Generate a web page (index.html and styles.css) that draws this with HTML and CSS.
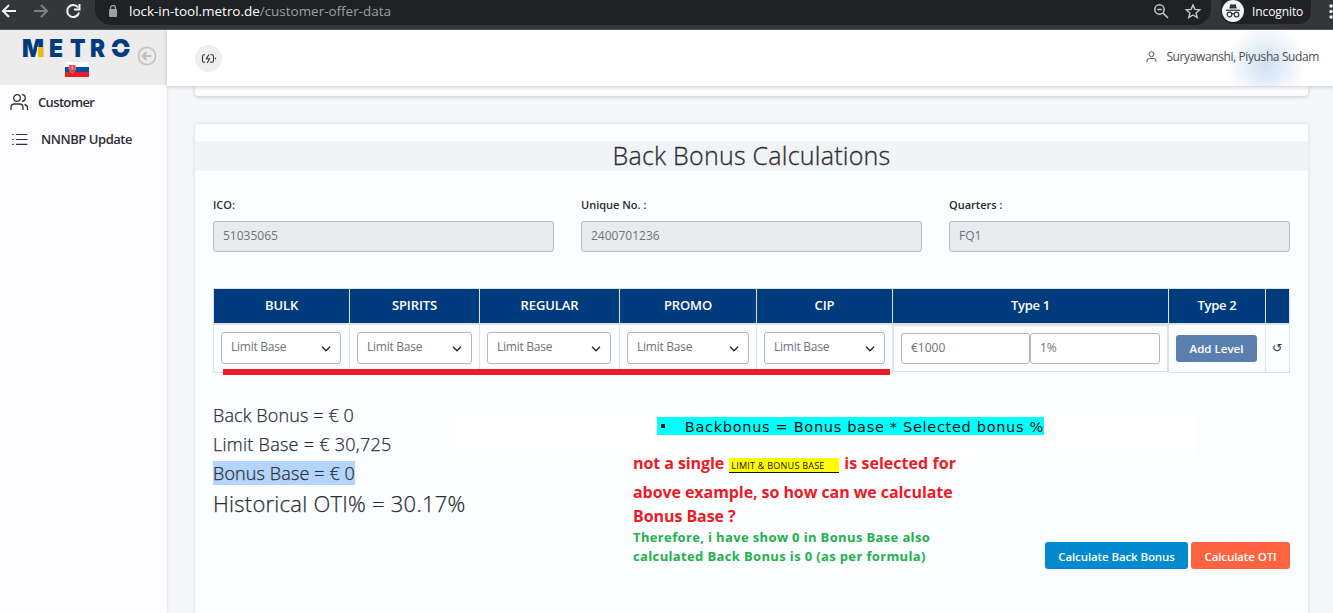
FILE: index.html
```html
<!DOCTYPE html>
<html lang="en">
<head>
<meta charset="utf-8">
<title>Customer offer data</title>
<link rel="stylesheet" href="styles.css">
</head>
<body>
<div class="screen">
  <header class="browser">
    <svg class="nav-icons" width="95" height="24" viewBox="0 0 95 24" fill="none" stroke-width="2">
      <path d="M16 11H3M9 5L3 11l6 6" stroke="#f1f3f4"/>
      <path d="M34 11h13M41 5l6 6-6 6" stroke="#7f8184"/>
      <path d="M78 7.500A6 6 0 1 0 79 12.500M79.500 4v5.500H74" stroke="#f1f3f4"/>
    </svg>
    <div class="address">
      <svg class="lock" width="10" height="12" viewBox="0 0 10 12"><rect x="1" y="4" width="8" height="8" rx="1" fill="#9aa0a6"/><path d="M2.500 5V3a2.500 2.500 0 0 1 5 0v2" fill="none" stroke="#9aa0a6" stroke-width="1.300"/></svg>
      <span class="url"><b>lock-in-tool.metro.de</b>/customer-offer-data</span>
      <svg class="addr-icons" width="50" height="20" viewBox="0 0 50 20" fill="none" stroke="#c6c8ca" stroke-width="1.500">
        <circle cx="6.500" cy="8.500" r="4.700"/><path d="M10 12l5 5M4.300 8.500h4.400"/>
        <path d="M40 4l1.900 4.400 4.800.4-3.600 3.100 1.100 4.600-4.200-2.500-4.200 2.500 1.100-4.600-3.600-3.100 4.800-.4z" stroke-width="1.400"/>
      </svg>
    </div>
    <div class="incognito">
      <svg width="22" height="22" viewBox="0 0 22 22"><circle cx="11" cy="11" r="11" fill="#f1f3f4"/><path d="M7.200 8.500l1.200-4.500q2.600 1 5.200 0l1.200 4.500z" fill="#303134"/><path d="M4 10.300h14" stroke="#303134" stroke-width="1.200"/><g fill="none" stroke="#303134" stroke-width="1.200"><circle cx="7.500" cy="14.500" r="2.300"/><circle cx="14.500" cy="14.500" r="2.300"/><path d="M9.900 14q1.100-.7 2.200 0"/></g></svg>
      <span class="incog-text">Incognito</span>
    </div>
    <svg class="dots" width="4" height="18" viewBox="0 0 4 18" fill="#e8eaed"><circle cx="2" cy="4" r="1.700"/><circle cx="2" cy="9.500" r="1.700"/><circle cx="2" cy="15" r="1.700"/></svg>
  </header>
  <div class="app">
    <aside class="sidebar">
      <div class="brand">
        <div class="logo"><span class="m">M</span><span class="e">E</span><span class="t">T</span><span class="r">R</span><span class="o">O</span></div>
        <i class="spark"></i><i class="slit"></i>
        <svg class="flag" width="24" height="15" viewBox="0 0 24 15"><path fill="#fff" d="M0 0h24v5H0z"/><path fill="#0b4ea2" d="M0 5h24v5H0z"/><path fill="#ee1c25" d="M0 10h24v5H0z"/><path d="M4 3h6.500v5q-1 2-3.200 3Q5 10 4 8z" fill="#ee3a45" stroke="#e8a0ae" stroke-width=".5"/><path d="M7.300 4v4M6 5.800h2.600" stroke="#f6c5cc" stroke-width=".8"/></svg>
        <svg class="back" width="20" height="20" viewBox="0 0 20 20" fill="none" stroke="#c0c0c0" stroke-width="1.600"><circle cx="10" cy="10" r="8.600"/><path d="M14.500 10H6M9.500 6L5.600 10l3.900 4" stroke-width="2"/></svg>
      </div>
      <nav class="menu">
        <a class="item"><svg width="19" height="18" viewBox="0 0 19 18" fill="none" stroke="#333" stroke-width="1.300"><circle cx="7" cy="5" r="3.300"/><path d="M1 17v-2.500Q1 11 4.500 11h5Q13 11 13 14.500V17M12 1.700a3.300 3.300 0 0 1 0 6.600M14.500 11.500q3 .6 3 3.500v2"/></svg><span class="t-customer">Customer</span></a>
        <a class="item second"><svg width="16" height="12" viewBox="0 0 16 12" stroke="#333" stroke-width="1.200"><path d="M4 1.500h11.500M4 6.500h11.500M4 11.400h11.500M.2 1.500h1.500M.2 6.500h1.500M.2 11.400h1.500"/></svg><span class="t-update">NNNBP Update</span></a>
      </nav>
    </aside>
    <main class="main">
      <div class="topbar">
        <div class="power"><svg width="16" height="11" viewBox="0 0 16 11" fill="none" stroke="#333" stroke-width="1.100"><path d="M4 1.700H3Q1.500 1.700 1.500 3.200v4.600q0 1.500 1.500 1.500H4M9.500 1.700H11q1.500 0 1.500 1.500v4.600q0 1.500-1.500 1.500H9M8 1.500L5.300 5.700H8.500L6.300 10M14.500 4.800v1.500"/></svg></div>
        <div class="user"><svg width="11" height="12" viewBox="0 0 11 12" fill="none" stroke="#555" stroke-width="1"><circle cx="5.500" cy="3.200" r="2.500"/><path d="M1 11V9.800Q1 7.500 3.500 7.500h4Q10 7.500 10 9.800V11"/></svg><span class="t-user">Suryawanshi, Piyusha Sudam</span></div>
      </div>
      <div class="previous"></div>
      <section class="card">
        <h1 class="title"><span>Back Bonus Calculations</span></h1>
        <div class="fields">
          <label class="field"><span>ICO:</span><div class="box">51035065</div></label>
          <label class="field"><span>Unique No. :</span><div class="box">2400701236</div></label>
          <label class="field"><span>Quarters :</span><div class="box">FQ1</div></label>
        </div>
        <div class="grid">
          <div class="th">BULK</div><div class="th">SPIRITS</div><div class="th">REGULAR</div><div class="th">PROMO</div><div class="th">CIP</div><div class="th type">Type 1</div><div class="th type">Type 2</div><div class="th"></div>
          <div class="td"><div class="select">Limit Base<svg class="chev" width="10" height="6" viewBox="0 0 10 6"><path d="M1 .8l4 4 4-4"/></svg></div></div>
          <div class="td wide"><div class="select">Limit Base<svg class="chev" width="10" height="6" viewBox="0 0 10 6"><path d="M1 .8l4 4 4-4"/></svg></div></div>
          <div class="td"><div class="select">Limit Base<svg class="chev" width="10" height="6" viewBox="0 0 10 6"><path d="M1 .8l4 4 4-4"/></svg></div></div>
          <div class="td wide"><div class="select">Limit Base<svg class="chev" width="10" height="6" viewBox="0 0 10 6"><path d="M1 .8l4 4 4-4"/></svg></div></div>
          <div class="td wide"><div class="select">Limit Base<svg class="chev" width="10" height="6" viewBox="0 0 10 6"><path d="M1 .8l4 4 4-4"/></svg></div></div>
          <div class="td type1"><div class="amount">€1000</div><div class="amount">1%</div></div>
          <div class="td"><div class="add"><span>Add Level</span></div></div>
          <div class="td reset"><span>↺</span></div>
          <i class="underline"></i>
        </div>
        <div class="lower">
          <div class="results">
            <p><span class="r1">Back Bonus = € 0</span></p>
            <p><span class="r2">Limit Base = € 30,725</span></p>
            <p><span class="r3">Bonus Base = € 0</span></p>
            <p class="history"><span class="r4">Historical OTI% = 30.17%</span></p>
          </div>
          <div class="notes">
            <div class="formula"><div class="cyan"><i class="bullet"></i><span>Backbonus = Bonus base * Selected bonus %</span></div></div>
            <div class="red n1"><span>not a single</span><span class="yellow">LIMIT &amp; BONUS BASE</span><span class="n1-end">is selected for</span></div>
            <div class="red n2">above example, so how can we calculate</div>
            <div class="red n3">Bonus Base ?</div>
            <div class="green">Therefore, i have show 0 in Bonus Base also</div>
            <div class="green">calculated Back Bonus is 0 (as per formula)</div>
          </div>
        </div>
        <div class="actions"><div class="btn blue"><span>Calculate Back Bonus</span></div><div class="btn orange"><span>Calculate OTI</span></div></div>
      </section>
    </main>
  </div>
</div>
</body>
</html>
```
FILE: styles.css
```css
* { box-sizing: border-box; }
body { margin: 0; font-family: "Open Sans", sans-serif; color: #2b2d31; }
.screen { width: 1333px; height: 613px; overflow: hidden; display: flex; flex-direction: column; background: #f6f7fa; }
span { white-space: nowrap; }
i { font-style: normal; }

.browser { height: 30px; flex: none; background: #35363a; border-bottom: 1px solid #5b5b5e; display: flex; align-items: flex-start; }
.nav-icons { flex: none; }
.address { width: 1116px; height: 25px; background: #202124; border-radius: 0 0 16px 16px; display: flex; padding-left: 13px; }
.lock { margin: 5px 11px 0 0; }
.url { font-size: 13.5px; line-height: 22px; letter-spacing: -.03px; color: #9aa0a6; flex: 1; }
.url b { color: #fff; font-weight: 400; }
.addr-icons { margin: 1px 8px 0 0; }
.incognito { margin-left: 10px; width: 90px; height: 24px; background: #202124; border-radius: 0 0 12px 12px; display: flex; gap: 8px; padding-left: 1px; font-size: 12px; line-height: 23px; color: #fff; }
.incog-text { letter-spacing: -.1px; }
.dots { margin: 2px 0 0 18px; flex: none; }

.app { flex: 1; display: flex; min-height: 0; }
.sidebar { width: 167px; background: #fdfdff; box-shadow: 0 0 3px #0002; flex: none; }
.brand { height: 55px; background: #ececec; position: relative; }
.logo { display: flex; font-family: Inter, sans-serif; font-weight: 900; font-size: 25px; line-height: 36px; color: #003b7e; padding-left: 22px; }
.logo span { flex: none; transform-origin: 0 50%; }
.m { width: 27px; transform: scaleX(.92); }
.e { width: 21px; transform: scaleX(.92); }
.t { width: 20px; transform: scaleX(.9); }
.r { width: 21px; transform: scaleX(.9); }
.o { width: 20px; }
.spark { position: absolute; left: 37px; top: 17px; width: 6px; height: 10px; background: #ffb400; border-left: 1px solid #ececec; }
.slit { position: absolute; left: 110px; top: 17px; width: 23px; height: 2px; background: #ececec; }
.flag { position: absolute; left: 65px; top: 32px; }
.back { position: absolute; left: 137px; top: 16px; }
.menu { padding-top: 6px; }
.item { display: flex; align-items: center; gap: 9px; height: 22px; padding-left: 10px; font-size: 13px; font-weight: 600; }
.second { margin-top: 15px; gap: 13px; padding-left: 12px; }
.t-customer { letter-spacing: -.65px; }
.t-update { letter-spacing: -.45px; }

.main { flex: 1; min-width: 0; }
.topbar { height: 56px; background: radial-gradient(circle at 1099px 34px, #cfe0f4 0, #fff0 40px), #fff; box-shadow: 0 1px 4px #0003; position: relative; display: flex; justify-content: space-between; padding: 15px 14px 0 28px; }
.power { width: 27px; height: 27px; border-radius: 50%; background: #eee; display: grid; place-items: center; }
.user { display: flex; gap: 9px; font-size: 12px; line-height: 24px; color: #4b4d51; align-self: flex-start; }
.t-user { letter-spacing: -.39px; }
.user svg { margin-top: 6px; }
.previous { margin: 0 25px 0 28px; height: 10px; background: #fdfdff; border-radius: 0 0 3px 3px; box-shadow: 0 1px 4px #0003; }
.card { margin: 28px 25px 0 28px; height: 520px; background: #fcfdff; border-radius: 3px; box-shadow: 0 0 4px #0002; padding-top: 17px; }
.title { margin: 0; height: 30px; background: #f1f4f6; text-align: center; font-size: 25px; font-weight: 300; letter-spacing: .24px; line-height: 28px; -webkit-text-stroke: .3px #2b2d31; }
.fields { display: flex; gap: 27px; padding: 24px 17px 0 18px; }
.field { width: 341px; flex: none; font-size: 11px; font-weight: 600; line-height: 20px; }
.box { margin-top: 6px; height: 31px; border: 1px solid #b9bbbd; border-radius: 3px; background: #e8ebed; color: #6c737a; font-size: 12px; font-weight: 400; line-height: 28px; padding-left: 9px; }

.grid { position: relative; margin: 36px 0 0 18px; width: 1077px; height: 85px; display: grid; grid-template-columns: 136px 130px 140px 137px 136px 276px 97px 24px; grid-template-rows: 35px 49px; border: solid #dee2e6; border-width: 1px 0 0 1px; }
.th { background: #003b7e; color: #fff; border-right: 1px solid #dee2e6; border-bottom: 1px solid #dee2e6; font-size: 13px; font-weight: 600; letter-spacing: -.1px; line-height: 32px; text-align: center; }
.type { letter-spacing: -.3px; }
.td { border: solid #dee2e6; border-width: 1px 1px 1px 0; padding: 7px 8px 0 7px; }
.wide { padding-right: 7px; }
.select { height: 32px; border: 1px solid #b5b7ba; border-radius: 3px; background: #fff; display: flex; justify-content: space-between; font-size: 12px; letter-spacing: -.25px; line-height: 28px; color: #6c737a; padding: 0 9px; }
.chev { margin-top: 13px; fill: none; stroke: #222; stroke-width: 1.3; }
.type1 { display: flex; height: 48px; border-width: 2px 2px 1px 1px; padding-right: 6px; }
.amount { flex: none; width: 129px; height: 31px; border: 1px solid #b5b7ba; border-radius: 3px; background: #fff; font-size: 12px; line-height: 28px; color: #6c737a; padding-left: 9px; }
.amount + .amount { width: 130px; }
.add { margin-top: 3px; height: 27px; width: 81px; border-radius: 3px; background: #5a7faf; color: #fff; font-size: 11.5px; font-weight: 600; text-align: center; line-height: 28px; }
.reset { font-family: "DejaVu Sans", sans-serif; font-size: 12px; line-height: 32px; padding-left: 6px; }
.underline { position: absolute; left: 9px; top: 80px; width: 667px; height: 6px; background: #ed1c24; }

.lower { display: flex; height: 169px; }
.results { width: 260px; flex: none; padding: 28px 0 0 18px; font-size: 18px; font-weight: 300; line-height: 29px; -webkit-text-stroke: .25px #2b2d31; }
.results p { margin: 0; height: 29px; }
.results .history { font-size: 22px; line-height: 33px; margin-top: -1px; }
.r1 { letter-spacing: .12px; }
.r2 { letter-spacing: .27px; }
.r3 { letter-spacing: .12px; background: #b3d4fc; display: inline-block; line-height: 24px; }
.r4 { letter-spacing: .25px; }
.notes { width: 741px; padding-top: 44px; }
.formula { background: #fff; height: 38px; padding-left: 202px; }
.cyan { width: 387px; height: 18px; background: #0ff; display: flex; align-items: center; font: 14.5px/18px "DejaVu Sans", sans-serif; letter-spacing: .69px; color: #111; }
.cyan span { padding-top: 1px; }
.bullet { width: 4px; height: 4px; background: #111; margin: 0 20px 0 4px; }
.red, .green { font-weight: 700; padding-left: 178px; white-space: nowrap; }
.red { color: #ed1c24; font-size: 16px; letter-spacing: -.07px; }
.green { color: #22b14c; font-size: 13px; line-height: 19px; letter-spacing: .36px; position: relative; top: 2px; }
.n1 { display: flex; height: 24px; line-height: 16px; }
.n1-end { letter-spacing: .05px; }
.n2 { line-height: 27px; }
.n3 { line-height: 20px; }
.yellow { background: #ff0; color: #111; font-size: 9px; font-weight: 400; letter-spacing: .25px; border-bottom: 1px solid #111; width: 110px; height: 15px; line-height: 15px; margin: 3px 5px 0; padding-left: 2px; }
.actions { display: flex; justify-content: flex-end; gap: 3px; padding-right: 18px; }
.btn { height: 27px; border-radius: 3px; color: #fff; text-align: center; line-height: 30px; font-size: 11.5px; font-weight: 600; letter-spacing: -.1px; }
.blue { width: 143px; background: #008acd; }
.orange { width: 99px; background: #ff6340; }
```
